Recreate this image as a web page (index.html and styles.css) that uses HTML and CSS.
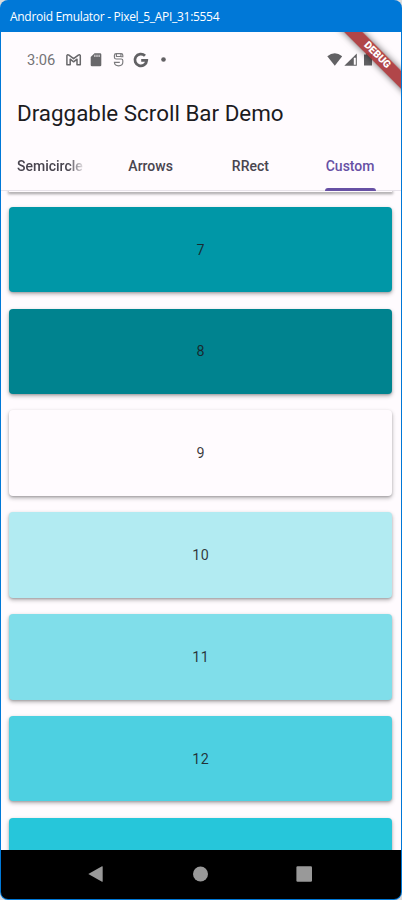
FILE: index.html
```
<!DOCTYPE html>
<html lang="en">
<head>
<meta charset="utf-8">
<title>Android Emulator</title>
<link rel="stylesheet" href="styles.css">
</head>
<body>
<div class="window">
  <header class="titlebar"><span>Android Emulator - Pixel_5_API_31:5554</span></header>
  <main class="screen">
    <div class="statusbar">
      <span class="clock">3:06</span>
      <svg class="status-icons" width="100" height="20" viewBox="0 0 100 20">
        <path d="M1.900 14.700V5.500q.6-1.400 2-.4l4.700 3.600 4.700-3.600q1.400-1 2 .4v9.200h-3.300V9.200l-3.400 2.600-3.400-2.600v5.500z" fill="none" stroke="#68676a" stroke-width="1.500" stroke-linejoin="round"/>
        <path d="M29.500 3.300h5.500q1.300 0 1.300 1.300v10.300q0 1.300-1.300 1.300h-8q-1.300 0-1.300-1.300V7z" fill="#68676a"/>
        <path d="M29.900 4.700v2.300M32 4.700v2.300M34.100 4.700v2.300" stroke="#fffbfe" stroke-width=".9"/>
        <path d="M57.800 5.300q0-1.700-1.600-1.700h-5q-1.800 0-1.800 1.700v1.900q0 1.800 1.800 1.800h5q1.600 0 1.600 1.600v1.700q0 3.500-4.200 3.500t-4.200-3.500h5.400M51.400 3.800v2.700h4.500V3.800M57.800 5.300v1.400h-2" fill="none" stroke="#7b7a7d" stroke-width="1.150"/>
        <path d="M80 5.800A5.900 5.900 0 1 0 81.700 10.300h-5.500" fill="none" stroke="#626164" stroke-width="2.800"/>
        <circle cx="98.500" cy="9.500" r="2.300" fill="#626164"/>
      </svg>
      <svg class="signal-icons" width="48" height="20" viewBox="0 0 48 20">
        <path d="M.3 6.200Q7.700 .2 15.200 6.200L7.800 15.800z" fill="#626164"/>
        <path d="M17.300 15.700 29.800 3.400v12.300z" fill="#626164"/>
        <path d="M26.800 7.800h2v7h-2z" fill="#fffbfe"/>
        <path d="M39.200 3h3v1.400h2.800v11.200h-8V4.400h2.200z" fill="#626164"/>
      </svg>
    </div>
    <h1 class="title">Draggable Scroll Bar Demo</h1>
    <nav class="tabs">
      <div class="tab"><span class="label faded">Semicircle</span></div>
      <div class="tab"><span class="label">Arrows</span></div>
      <div class="tab"><span class="label">RRect</span></div>
      <div class="tab active"><span class="label">Custom</span></div>
    </nav>
    <section class="list">
      <div class="card edge"></div>
      <div class="card c7">7</div>
      <div class="card c8">8</div>
      <div class="card c9">9</div>
      <div class="card c10">10</div>
      <div class="card c11">11</div>
      <div class="card c12">12</div>
      <div class="card c13"></div>
    </section>
    <div class="debug"><span class="ribbon">DEBUG</span></div>
  </main>
  <footer class="navbar">
    <svg width="16" height="18" viewBox="0 0 16 18"><path d="M.3 9 14 1.200q.7-.2.700.5v14.600q0 .7-.7.500z" fill="#999"/></svg>
    <svg width="16" height="18" viewBox="0 0 16 18"><circle cx="8.500" cy="9" r="7.500" fill="#999"/></svg>
    <svg width="16" height="18" viewBox="0 0 16 18"><rect x=".4" y="1.300" width="15.600" height="15.500" rx="1.200" fill="#999"/></svg>
  </footer>
</div>
</body>
</html>
```
FILE: styles.css
```
* { box-sizing: border-box; }
html { background: #dcdcdc; }
body { margin: 0; font-family: Roboto, sans-serif; }
.window {
  width: 402px; height: 900px;
  display: flex; flex-direction: column;
  background: #0078d7;
  border-radius: 8px;
  overflow: hidden;
  padding: 0 1px 1px;
}
.titlebar {
  height: 32px; flex: none;
  display: flex; align-items: center;
  padding-left: 9px; padding-top: 1px;
  color: #fff;
  font: 12px/16px "Open Sans", "Noto Sans", sans-serif;
  letter-spacing: -0.3px;
  white-space: nowrap;
}
.screen {
  position: relative;
  height: 818px; flex: none;
  display: flex; flex-direction: column;
  overflow: hidden;
  background: #fffbfe;
}
.statusbar {
  height: 56px; flex: none;
  display: flex; align-items: center;
  padding: 0 26px;
}
.clock { width: 38px; font-size: 14.700px; color: #747376; line-height: 20px; }
.status-icons { overflow: visible; }
.signal-icons { margin-left: auto; margin-right: 0; }
.title {
  margin: 0; height: 52px; flex: none;
  padding-left: 16px;
  font-size: 22.400px; line-height: 51px; font-weight: 400;
  color: #1c1b1f;
  white-space: nowrap;
}
.tabs {
  height: 50.500px; flex: none;
  display: grid; grid-template-columns: repeat(4, 1fr);
  padding-right: 1px;
  border-bottom: 1px solid #e7e2e9;
}
.tab {
  display: flex; flex-direction: column; align-items: center;
  color: #49454f;
  font-size: 14px; font-weight: 500; line-height: 20px;
  padding-top: 16px;
  min-width: 0;
}
.label { max-width: 68px; overflow: hidden; white-space: nowrap; }
.faded {
  -webkit-mask-image: linear-gradient(to right, #000 78%, transparent 104%);
  mask-image: linear-gradient(to right, #000 78%, transparent 104%);
}
.tab:first-child { padding-right: 2px; }
.active { color: #6750a4; }
.active::after {
  content: ""; width: 51px; height: 3px;
  margin-top: 12px; flex: none;
  background: #6750a4;
  border-radius: 3px 3px 0 0;
}
.list {
  flex: 1; min-height: 0;
  display: flex; flex-direction: column; gap: 16.300px;
  padding: 0 8.700px 0 8px;
  overflow: hidden;
}
.card {
  height: 85.500px; flex: none;
  display: flex; align-items: center; justify-content: center;
  border-radius: 4px;
  font-size: 14.300px; color: rgba(28,27,31,.88); letter-spacing: .25px;
  box-shadow: 0 2px 4px rgba(0,0,0,.3), 0 1px 2px rgba(0,0,0,.14);
}
.edge {
  height: .1px;
  border-radius: 0;
  box-shadow: 0 1px 3px 1px rgba(0,0,0,.38);
}
.c7 { background: #0097a7; }
.c8 { background: #00838f; }
.c9 { background: #fffbfe; }
.c10 { background: #b2ebf2; }
.c11 { background: #80deea; }
.c12 { background: #4dd0e1; }
.c13 { background: #26c6da; }
.debug {
  position: absolute; top: 0; right: 0;
  width: 80px; height: 80px;
  overflow: hidden;
}
.ribbon {
  position: absolute; left: -4.500px; top: 16.700px;
  width: 120px; height: 12.500px;
  transform: rotate(45deg);
  background: rgba(170,54,58,.92);
  box-shadow: 0 0 7px rgba(0,0,0,.6);
  color: #fff;
  font-size: 10.300px; font-weight: 900; line-height: 12.500px;
  text-align: center;
}
.navbar {
  flex: 1;
  display: flex; justify-content: center; align-items: center; gap: 88px;
  padding: 0 2px 1px 0;
  background: #000;
  border-radius: 0 0 7px 7px;
}
```
